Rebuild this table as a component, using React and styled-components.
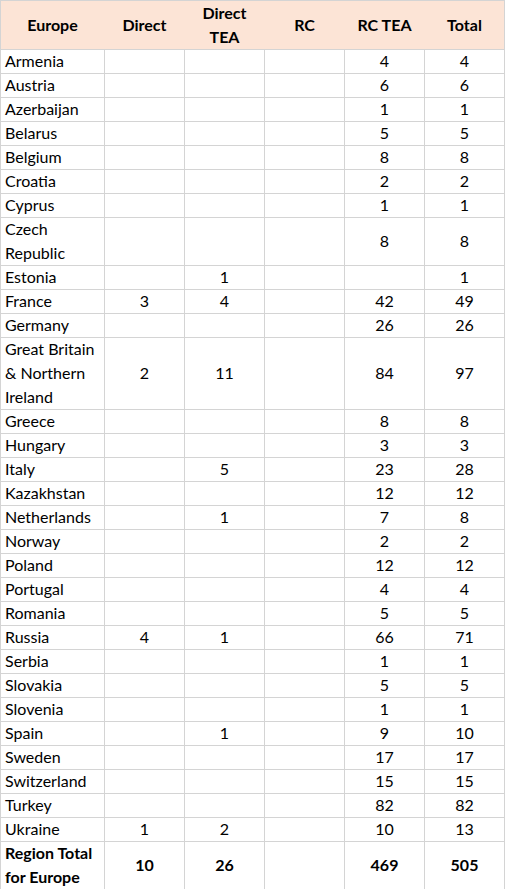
import React from 'react';
import styled, { createGlobalStyle } from 'styled-components';

const GlobalStyle = createGlobalStyle`
  html, body {
    margin: 0;
    padding: 0;
    background: #ffffff;
  }
  body {
    font-family: Lato, "Open Sans", "Liberation Sans", sans-serif;
    color: #000000;
  }
`;

const rows = [
  ['Armenia', '', '', '', '4', '4'],
  ['Austria', '', '', '', '6', '6'],
  ['Azerbaijan', '', '', '', '1', '1'],
  ['Belarus', '', '', '', '5', '5'],
  ['Belgium', '', '', '', '8', '8'],
  ['Croatia', '', '', '', '2', '2'],
  ['Cyprus', '', '', '', '1', '1'],
  ['Czech\nRepublic', '', '', '', '8', '8'],
  ['Estonia', '', '1', '', '', '1'],
  ['France', '3', '4', '', '42', '49'],
  ['Germany', '', '', '', '26', '26'],
  ['Great Britain\n& Northern\nIreland', '2', '11', '', '84', '97'],
  ['Greece', '', '', '', '8', '8'],
  ['Hungary', '', '', '', '3', '3'],
  ['Italy', '', '5', '', '23', '28'],
  ['Kazakhstan', '', '', '', '12', '12'],
  ['Netherlands', '', '1', '', '7', '8'],
  ['Norway', '', '', '', '2', '2'],
  ['Poland', '', '', '', '12', '12'],
  ['Portugal', '', '', '', '4', '4'],
  ['Romania', '', '', '', '5', '5'],
  ['Russia', '4', '1', '', '66', '71'],
  ['Serbia', '', '', '', '1', '1'],
  ['Slovakia', '', '', '', '5', '5'],
  ['Slovenia', '', '', '', '1', '1'],
  ['Spain', '', '1', '', '9', '10'],
  ['Sweden', '', '', '', '17', '17'],
  ['Switzerland', '', '', '', '15', '15'],
  ['Turkey', '', '', '', '82', '82'],
  ['Ukraine', '1', '2', '', '10', '13'],
];

const headers = ['Europe', 'Direct', 'Direct\nTEA', 'RC', 'RC TEA', 'Total'];
const totals = ['Region Total\nfor Europe', '10', '26', '', '469', '505'];

const lineCount = (r) => r[0].split('\n').length;

const Sheet = styled.div`
  width: 505px;
  box-sizing: border-box;
  border-top: 1px solid #d4d4d4;
  border-left: 1px solid #d4d4d4;
  font-size: 16px;
  line-height: 24px;
`;

const Row = styled.div`
  display: grid;
  grid-template-columns: 104px repeat(5, 80px);
  height: ${({ $lines }) => $lines * 24}px;
  background: ${({ $head }) => ($head ? '#fce4d6' : 'transparent')};
  font-weight: ${({ $bold }) => ($bold ? 700 : 400)};
`;

const Cell = styled.div`
  box-sizing: border-box;
  height: 100%;
  border-bottom: 1px solid #d4d4d4;
  border-right: 1px solid ${({ $head }) => ($head ? '#fce4d6' : '#d4d4d4')};
  display: flex;
  align-items: center;
  justify-content: ${({ $left }) => ($left ? 'flex-start' : 'center')};
  text-align: ${({ $left }) => ($left ? 'left' : 'center')};
  padding: 0 4px;
  white-space: pre-line;
  overflow: visible;
  &:last-child {
    border-right-color: #d4d4d4;
  }
`;

const HeadCell = styled(Cell)`
  justify-content: center;
  text-align: center;
  font-weight: 700;
`;

export default function App() {
  return (
    <>
      <GlobalStyle />
      <Sheet>
        <Row $head $lines={2}>
          {headers.map((h, i) => (
            <HeadCell key={i} $head>
              {h}
            </HeadCell>
          ))}
        </Row>
        {rows.map((r, ri) => (
          <Row key={ri} $lines={lineCount(r)}>
            {r.map((v, i) => (
              <Cell key={i} $left={i === 0}>
                {v}
              </Cell>
            ))}
          </Row>
        ))}
        <Row $bold $lines={2}>
          {totals.map((v, i) => (
            <Cell key={i} $left={i === 0}>
              {v}
            </Cell>
          ))}
        </Row>
      </Sheet>
    </>
  );
}
